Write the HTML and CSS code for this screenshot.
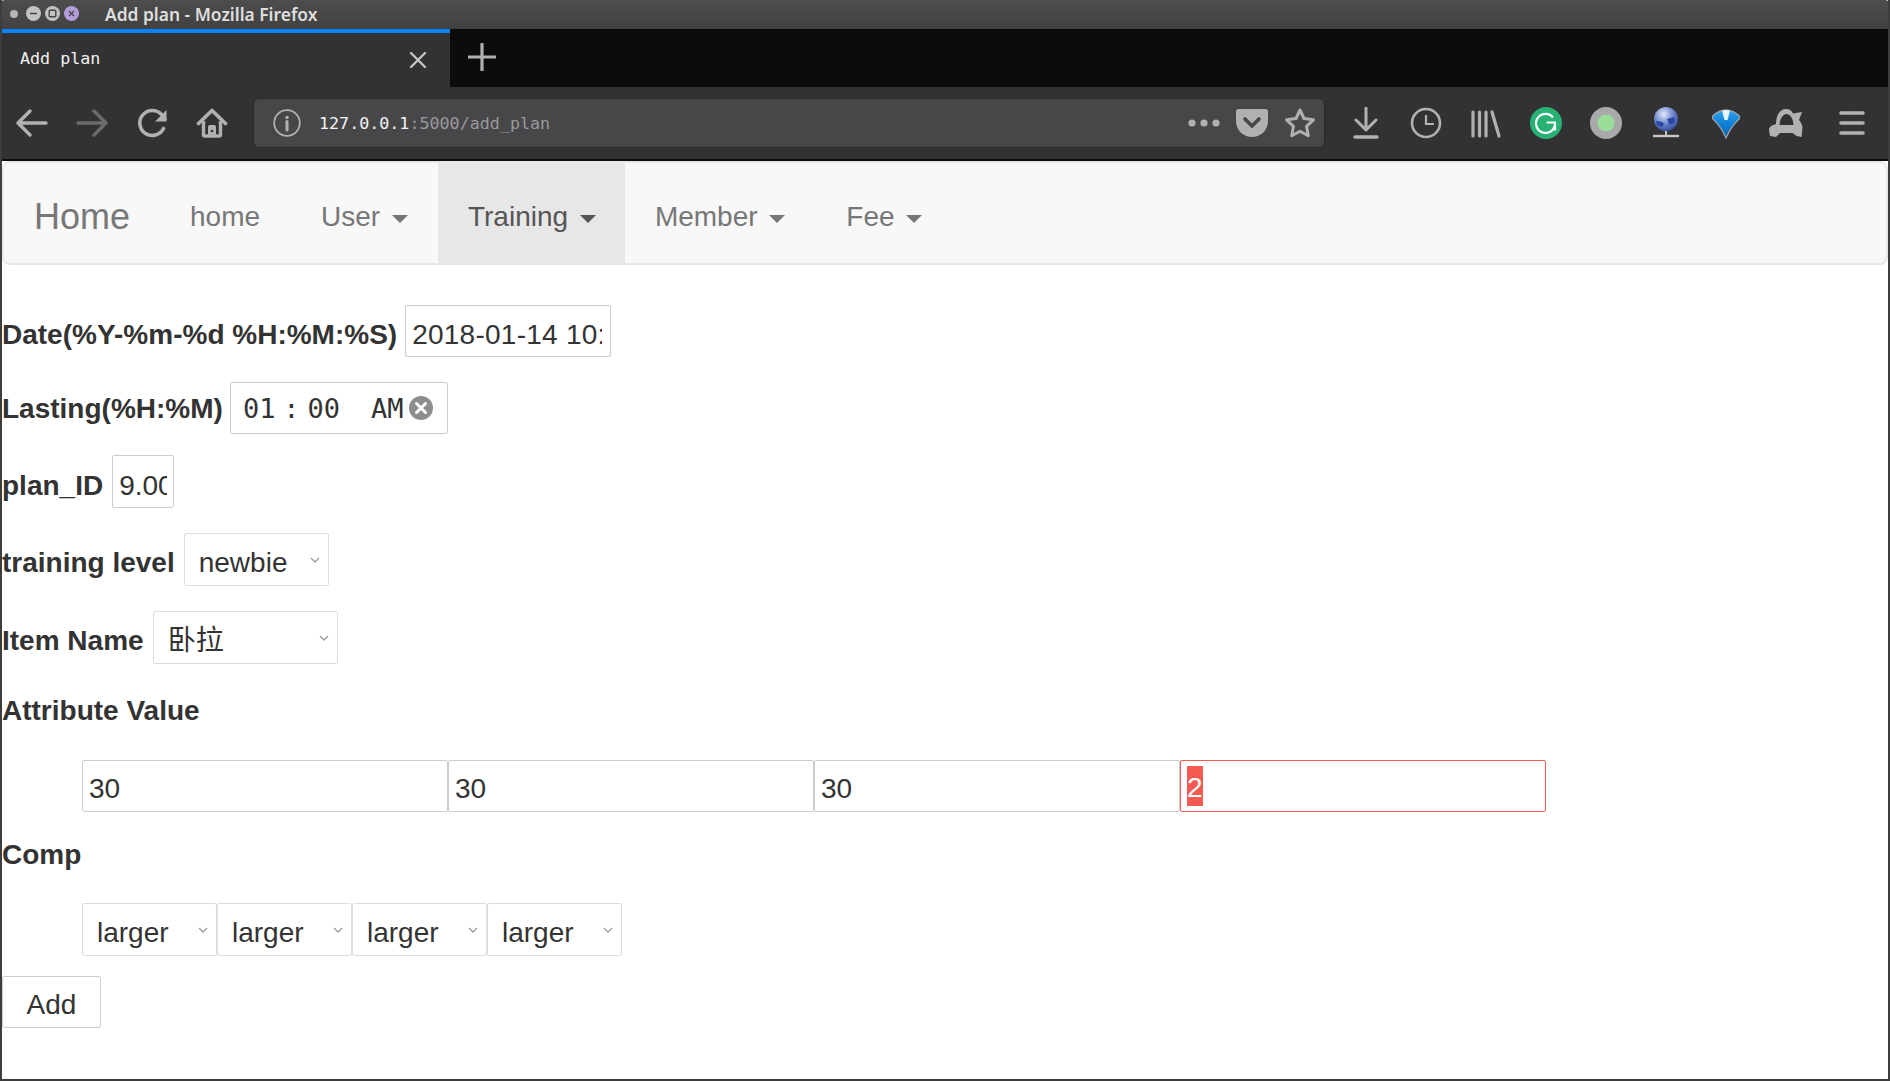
FILE: index.html
```html
<!DOCTYPE html>
<html lang="en">
<head>
    <meta charset="UTF-8">
    <title>Add plan</title>
    <link rel="stylesheet" href="styles.css">
</head>
<body>
<div class="window">
    <div class="title-bar">
        <div class="win-buttons">
            <span class="win-dot"></span>
            <span class="win-btn"><svg width="15" height="15" viewBox="0 0 15 15"><path d="M4 7.5h7" stroke="#444" stroke-width="1.5"/></svg></span>
            <span class="win-btn"><svg width="15" height="15" viewBox="0 0 15 15"><rect x="4.2" y="4.2" width="6.6" height="6.6" rx="1" fill="none" stroke="#444" stroke-width="1.4"/></svg></span>
            <span class="win-btn win-close"><svg width="15" height="15" viewBox="0 0 15 15"><path d="M5 5l5 5M10 5l-5 5" stroke="#444" stroke-width="1.2"/></svg></span>
        </div>
        <span class="win-title">Add plan - Mozilla Firefox</span>
    </div>

    <div class="tab-strip">
        <div class="tab">
            <span class="tab-title">Add plan</span>
            <svg class="tab-close" width="20" height="20" viewBox="0 0 20 20"><path d="M3 3l14 14M17 3L3 17" stroke="#c4c4c6" stroke-width="2.4" stroke-linecap="round"/></svg>
        </div>
        <svg class="new-tab" width="28" height="28" viewBox="0 0 28 28"><path d="M14 1v26M1 14h26" stroke="#b1b1b3" stroke-width="3.2" stroke-linecap="round"/></svg>
    </div>

    <div class="toolbar">
        <span class="tool-btn"><svg width="32" height="32" viewBox="0 0 32 32"><path d="M30 16H3M14 4L2 16l12 12" fill="none" stroke="#b1b1b3" stroke-width="3.4" stroke-linecap="round" stroke-linejoin="round"/></svg></span>
        <span class="tool-btn"><svg width="32" height="32" viewBox="0 0 32 32"><path d="M2 16h27M18 4l12 12-12 12" fill="none" stroke="#6b6b6d" stroke-width="3.4" stroke-linecap="round" stroke-linejoin="round"/></svg></span>
        <span class="tool-btn"><svg width="32" height="32" viewBox="0 0 32 32"><path d="M27.500 21.500A12.500 12.500 0 1 1 25.500 7.500L29 12" fill="none" stroke="#b1b1b3" stroke-width="3.600" stroke-linecap="round"/><path d="M30.500 3v11.500H19z" fill="#b1b1b3"/></svg></span>
        <span class="tool-btn"><svg width="32" height="32" viewBox="0 0 32 32"><path d="M2.500 16.500L16 3.500l13.500 13" fill="none" stroke="#b1b1b3" stroke-width="3.600" stroke-linecap="round" stroke-linejoin="round"/><path d="M7.500 14v13.500a1.500 1.500 0 0 0 1.500 1.500h14a1.500 1.500 0 0 0 1.500-1.500V14" fill="none" stroke="#b1b1b3" stroke-width="3.400"/><path d="M12 29V20a2 2 0 0 1 2-2h4a2 2 0 0 1 2 2v9z" fill="#b1b1b3"/><circle cx="16" cy="24" r="1.300" fill="#323234"/></svg></span>

        <div class="address-bar">
            <svg class="addr-info" width="28" height="28" viewBox="0 0 28 28"><circle cx="14" cy="14" r="12.800" fill="none" stroke="#b1b1b3" stroke-width="1.800"/><circle cx="14" cy="8.500" r="1.800" fill="#b1b1b3"/><path d="M14 12.500v8.500" stroke="#b1b1b3" stroke-width="3" stroke-linecap="round"/></svg>
            <span class="addr-url"><span class="addr-host">127.0.0.1</span>:5000/add_plan</span>
            <svg class="addr-dots" width="34" height="10" viewBox="0 0 34 10"><circle cx="5" cy="5" r="3.600" fill="#b1b1b3"/><circle cx="17" cy="5" r="3.600" fill="#b1b1b3"/><circle cx="29" cy="5" r="3.600" fill="#b1b1b3"/></svg>
            <svg class="addr-pocket" width="32" height="28" viewBox="0 0 32 28"><path d="M3 0h26a3 3 0 0 1 3 3v9c0 9-7 16-16 16S0 21 0 12V3a3 3 0 0 1 3-3z" fill="#b1b1b3"/><path d="M9 10l7 7 7-7" fill="none" stroke="#474749" stroke-width="3.600" stroke-linecap="round" stroke-linejoin="round"/></svg>
            <svg class="addr-star" width="32" height="32" viewBox="0 0 32 32"><path d="M16 3l4 8.500 9.500 1.300-7 6.500 1.800 9.400L16 24.200l-8.300 4.500 1.800-9.400-7-6.500 9.500-1.300z" fill="none" stroke="#b1b1b3" stroke-width="3" stroke-linejoin="round"/></svg>
        </div>

        <div class="tool-right">
            <span class="tool-btn"><svg width="32" height="32" viewBox="0 0 32 32"><path d="M16 1v21M6 13l10 10 10-10" fill="none" stroke="#b1b1b3" stroke-width="3" stroke-linecap="round" stroke-linejoin="round"/><path d="M5 30h22" stroke="#b1b1b3" stroke-width="3.400" stroke-linecap="round"/></svg></span>
            <span class="tool-btn"><svg width="32" height="32" viewBox="0 0 32 32"><circle cx="16" cy="16" r="14" fill="none" stroke="#b1b1b3" stroke-width="2.600"/><path d="M16 8v9h8" fill="none" stroke="#b1b1b3" stroke-width="2.200"/></svg></span>
            <span class="tool-btn"><svg width="32" height="32" viewBox="0 0 32 32"><path d="M3 5v24M9.500 5v24M16 5v24M22 5l7 24" fill="none" stroke="#b1b1b3" stroke-width="3.200" stroke-linecap="round"/></svg></span>
            <span class="tool-btn"><svg width="32" height="32" viewBox="0 0 32 32"><circle cx="16" cy="16" r="16" fill="#27b173"/><path d="M23 10.500a9.500 9.500 0 1 0 1.800 8" fill="none" stroke="#fff" stroke-width="2.200"/><path d="M16.500 15.500h8.500v8" fill="none" stroke="#fff" stroke-width="2.200"/></svg></span>
            <span class="tool-btn"><svg width="32" height="32" viewBox="0 0 32 32"><circle cx="16" cy="16" r="16" fill="#a9a9a9"/><circle cx="16" cy="16" r="8.500" fill="#99dd99"/></svg></span>
            <span class="tool-btn"><svg width="32" height="32" viewBox="0 0 32 32"><defs><radialGradient id="globe-fill" cx="0.4" cy="0.3" r="0.8"><stop offset="0" stop-color="#e4ebf8"/><stop offset="0.5" stop-color="#6d86cc"/><stop offset="1" stop-color="#27409a"/></radialGradient></defs><circle cx="16" cy="12" r="12" fill="url(#globe-fill)"/><path d="M6 14c4 1 6 0 8 3l-2 3-5-2zM17 12l7-2 1 5-5 3z" fill="#2c46a3"/><path d="M16 24v4" stroke="#c4c4c4" stroke-width="2"/><path d="M3 29h26" stroke="#c8c8c8" stroke-width="2.400"/></svg></span>
            <span class="tool-btn"><svg width="32" height="32" viewBox="0 0 32 32"><defs><linearGradient id="gem-fill" x1="0" y1="0" x2="0" y2="1"><stop offset="0" stop-color="#2fa4ee"/><stop offset="0.6" stop-color="#0a78d0"/><stop offset="1" stop-color="#16679f"/></linearGradient></defs><path d="M2.500 9Q16-3 29.500 9v2.500Q22 19 19 25l-3 6-3-6Q10 19 2.500 11.500z" fill="url(#gem-fill)" stroke="#9aa3aa" stroke-width="1.200"/><path d="M12 3.500Q16 2.500 20 3.500L17.500 13h-3z" fill="#e6f4fd"/></svg></span>
            <span class="tool-btn"><svg width="34" height="32" viewBox="0 0 34 32"><path d="M7 17C7 8 11 2 17 2c3.500 0 6 2 7 4.500L33 5l-3 8c2 2 3.500 5 3.500 8l-1 9-5-1-4-3H11l-4 4-6-1-1-6c0-3 3-5 7-6z" fill="#b1b1b3"/><path d="M10.500 18C11 11 14 7 17.500 7s6.500 4 7 11z" fill="#323234"/></svg></span>
            <span class="tool-btn tool-menu"><svg width="26" height="24" viewBox="0 0 26 24"><path d="M2 2h22M2 12h22M2 22h22" stroke="#b1b1b3" stroke-width="3.600" stroke-linecap="round"/></svg></span>
        </div>
    </div>

    <div class="page">
        <nav class="navbar">
            <a class="brand">Home</a>
            <a class="nav-link nav-first">home</a>
            <a class="nav-link">User <span class="caret"></span></a>
            <a class="nav-link active">Training <span class="caret"></span></a>
            <a class="nav-link nav-member">Member <span class="caret"></span></a>
            <a class="nav-link">Fee <span class="caret"></span></a>
        </nav>

        <form class="plan-form">
            <div class="field date-field">
                <label>Date(%Y-%m-%d %H:%M:%S)</label>
                <input class="control date-input" type="text" value="2018-01-14 10:00:00">
            </div>
            <div class="field time-field">
                <label>Lasting(%H:%M)</label>
                <div class="control time-input">
                    <span class="time-part">01</span><span class="time-colon">:</span><span class="time-part">00</span><span class="time-ampm">AM</span>
                    <svg class="time-clear" width="24" height="24" viewBox="0 0 24 24"><circle cx="12" cy="12" r="12" fill="#8e8e8e"/><path d="M7.500 7.500l9 9M16.500 7.500l-9 9" stroke="#fff" stroke-width="3" stroke-linecap="round"/></svg>
                </div>
            </div>
            <div class="field id-field">
                <label>plan_ID</label>
                <input class="control id-input" type="text" value="9.00000">
            </div>
            <div class="field">
                <label>training level</label>
                <select class="picker level-picker"><option>newbie</option></select>
            </div>
            <div class="field">
                <label>Item Name</label>
                <select class="picker item-picker"><option>卧拉</option></select>
            </div>

            <h5 class="sub-label attr-label">Attribute Value</h5>
            <div class="indent-row">
                <input class="control value-input" type="text" value="30">
                <input class="control value-input" type="text" value="30">
                <input class="control value-input" type="text" value="30">
                <div class="control value-input value-bad"><span class="selected-text">2</span></div>
            </div>

            <h5 class="sub-label comp-label">Comp</h5>
            <div class="indent-row comp-row">
                <select class="picker comp-picker"><option>larger</option></select>
                <select class="picker comp-picker"><option>larger</option></select>
                <select class="picker comp-picker"><option>larger</option></select>
                <select class="picker comp-picker"><option>larger</option></select>
            </div>

            <button class="add-btn" type="button">Add</button>
        </form>
    </div>
</div>
</body>
</html>
```

FILE: styles.css
```css
* {
    box-sizing: border-box;
}
body {
    margin: 0;
    background-color: white;
    font-family: "Liberation Sans", Arial, sans-serif;
    color: #333;
}
.window {
    width: 1890px;
    height: 1081px;
    overflow: hidden;
    border: 2px solid #3d3d3d;
    border-top: none;
    background-color: white;
}

/* window title */
.title-bar {
    height: 29px;
    margin: 0 -2px;
    padding: 0 0 2px 10px;
    display: flex;
    align-items: center;
    background: linear-gradient(#4d4d4d, #414141);
    border-radius: 5px 5px 0 0;
}
.win-buttons {
    display: flex;
    align-items: center;
    width: 95px;
}
.win-dot {
    width: 8px;
    height: 8px;
    margin-right: 8px;
    border-radius: 50%;
    background-color: #b5b5b5;
}
.win-btn {
    width: 15px;
    height: 15px;
    margin-right: 4px;
    display: flex;
    border-radius: 50%;
    background-color: #c2c2c2;
}
.win-close {
    background-color: #b39ddb;
}
.win-title {
    font-family: "Noto Sans", sans-serif;
    font-size: 17.4px;
    font-weight: 600;
    color: #dedede;
}

/* tabs */
.tab-strip {
    height: 58px;
    display: flex;
    align-items: center;
    background-color: #0c0c0d;
}
.tab {
    width: 448px;
    height: 58px;
    padding: 0 22px 4px 18px;
    display: flex;
    align-items: center;
    justify-content: space-between;
    background-color: #323234;
    border-top: 4px solid #0a84ff;
}
.tab-title {
    font-family: "DejaVu Sans Mono", monospace;
    font-size: 16.7px;
    color: #f1f1f1;
}
.tab-close {
    margin-top: 4px;
}
.new-tab {
    margin: 0 0 2px 18px;
}

/* toolbar */
.toolbar {
    height: 74px;
    display: flex;
    align-items: center;
    background-color: #323234;
    border-bottom: 2px solid #0c0c0d;
}
.tool-btn {
    width: 60px;
    height: 60px;
    flex: none;
    display: flex;
    align-items: center;
    justify-content: center;
}
.tool-menu {
    width: 72px;
}
.address-bar {
    width: 1072px;
    height: 50px;
    margin-left: 11px;
    padding: 0 8px 0 19px;
    display: flex;
    align-items: center;
    background-color: #474749;
    border: 1px solid #2a2a2c;
    border-radius: 6px;
}
.addr-url {
    margin-left: 18px;
    flex: 1;
    font-family: "DejaVu Sans Mono", monospace;
    font-size: 16.7px;
    color: #99999b;
}
.addr-host {
    color: #f4f4f4;
}
.addr-pocket {
    margin-left: 15px;
}
.addr-star {
    margin-left: 16px;
}
.tool-right {
    margin-left: 11px;
    display: flex;
    align-items: center;
}

/* navbar */
.navbar {
    height: 104px;
    display: flex;
    background-color: #f8f8f8;
    border: 2px solid #e7e7e7;
    border-radius: 8px;
}
.brand {
    padding: 34px 30px 26px;
    font-size: 36px;
    line-height: 40px;
    color: #777;
}
.nav-link {
    padding: 34px 30px 26px;
    font-size: 28px;
    line-height: 40px;
    color: #777;
}
.nav-first {
    padding-right: 31px;
}
.nav-member {
    padding-right: 31px;
}
.nav-link.active {
    padding-right: 29px;
    color: #555;
    background-color: #e7e7e7;
}
.caret {
    display: inline-block;
    margin-left: 4px;
    vertical-align: middle;
    border-top: 8px solid;
    border-left: 8px solid transparent;
    border-right: 8px solid transparent;
}

/* form */
.plan-form {
    padding-top: 40px;
}
.field {
    display: flex;
    align-items: baseline;
    gap: 9px;
    margin-bottom: 25px;
}
.time-field {
    margin-bottom: 21px;
}
label,
.sub-label {
    font-size: 28px;
    font-weight: bold;
    line-height: 40px;
    color: #333;
    margin: 0;
}
.control {
    height: 52px;
    padding: 7px 6px 0;
    font-family: "Liberation Sans", Arial, sans-serif;
    font-size: 28px;
    color: #333;
    background-color: #fff;
    border: 1px solid #ccc;
    border-radius: 2px;
    outline: none;
}
.date-input {
    width: 206px;
    margin-left: -1px;
    padding-right: 8px;
    letter-spacing: 0.25px;
}
.id-input {
    width: 62px;
    height: 53px;
    padding-top: 8px;
}
.time-input {
    width: 218px;
    margin-left: -2px;
    padding: 0 12px;
    display: flex;
    align-items: center;
    font-family: "DejaVu Sans Mono", monospace;
    font-size: 27px;
}
.time-colon {
    width: 32px;
    text-align: center;
}
.time-ampm {
    margin-left: 31px;
}
.time-clear {
    margin-left: 6px;
}
.picker {
    height: 53px;
    padding: 6px 24px 0 14px;
    appearance: none;
    font-family: "Liberation Sans", "Noto Sans CJK SC", sans-serif;
    font-size: 28px;
    color: #333;
    border: 1px solid #ddd;
    border-radius: 2px;
    outline: none;
    background: #fff url("data:image/svg+xml,%3Csvg xmlns='http://www.w3.org/2000/svg' width='10' height='6'%3E%3Cpath d='M1 1l4 4 4-4' fill='none' stroke='%23999' stroke-width='1.300'/%3E%3C/svg%3E") no-repeat right 8px top 23px;
}
.level-picker {
    width: 145px;
}
.item-picker {
    width: 185px;
}
.comp-picker {
    width: 135px;
    padding-top: 5px;
}
.attr-label {
    margin-top: 27px;
}
.comp-label {
    margin-top: 23px;
}
.indent-row {
    display: flex;
    padding-left: 80px;
    margin-top: 29px;
}
.comp-row {
    margin-top: 28px;
}
.value-input {
    width: 366px;
    padding-top: 5px;
}
.value-bad {
    padding: 5px 6px 0;
    border-color: #f55a52;
}
.selected-text {
    display: block;
    width: fit-content;
    height: 40px;
    line-height: 44px;
    overflow: hidden;
    color: #fff;
    background-color: #f55a52;
}
.add-btn {
    display: block;
    height: 52px;
    margin-top: 20px;
    padding: 5px 23.5px 0;
    font-family: "Liberation Sans", Arial, sans-serif;
    font-size: 28px;
    color: #333;
    background-color: #fff;
    border: 1px solid #ccc;
    border-radius: 2px;
}
```
